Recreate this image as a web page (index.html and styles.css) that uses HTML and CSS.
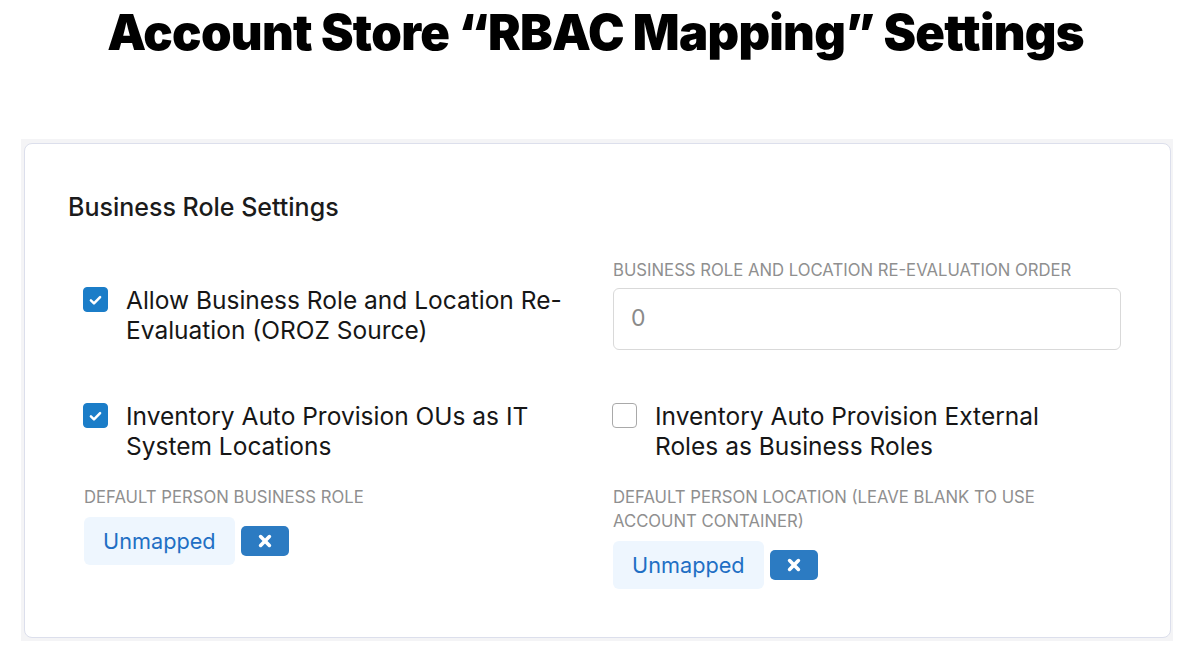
FILE: index.html
```html
<!DOCTYPE html>
<html lang="en">
<head>
<meta charset="utf-8">
<title>Account Store RBAC Mapping Settings</title>
<link rel="stylesheet" href="styles.css">
</head>
<body>
<h1 class="page-title">Account Store “RBAC Mapping” Settings</h1>
<div class="backdrop">
  <section class="card">
    <h2 class="card-title">Business Role Settings</h2>
    <div class="grid">
      <div class="cell cell-check-top">
        <label class="check">
          <span class="box checked"><svg viewBox="0 0 24 24" width="24" height="24"><path d="M7.2 12.4l3.2 3.1 6.4-6.6" fill="none" stroke="#fff" stroke-width="2.6" stroke-linecap="round" stroke-linejoin="round"/></svg></span>
          <span class="check-text">Allow Business Role and Location Re-Evaluation (OROZ Source)</span>
        </label>
      </div>
      <div class="cell">
        <div class="field-label">Business Role and Location Re-Evaluation Order</div>
        <div class="input">0</div>
      </div>
      <div class="cell row2">
        <label class="check">
          <span class="box checked"><svg viewBox="0 0 24 24" width="24" height="24"><path d="M7.2 12.4l3.2 3.1 6.4-6.6" fill="none" stroke="#fff" stroke-width="2.6" stroke-linecap="round" stroke-linejoin="round"/></svg></span>
          <span class="check-text">Inventory Auto Provision OUs as IT System Locations</span>
        </label>
      </div>
      <div class="cell row2">
        <label class="check">
          <span class="box"></span>
          <span class="check-text narrow">Inventory Auto Provision External Roles as Business Roles</span>
        </label>
      </div>
      <div class="cell row3">
        <div class="field-label">Default Person Business Role</div>
        <div class="mapping">
          <span class="unmapped">Unmapped</span>
          <span class="clear"><svg viewBox="0 0 18 18" width="18" height="18"><path d="M4.6 4.6l8.8 8.8M13.4 4.6l-8.8 8.8" stroke="#fff" stroke-width="3.6" stroke-linecap="round"/></svg></span>
        </div>
      </div>
      <div class="cell row3">
        <div class="field-label">Default Person Location (leave blank to use account container)</div>
        <div class="mapping">
          <span class="unmapped">Unmapped</span>
          <span class="clear"><svg viewBox="0 0 18 18" width="18" height="18"><path d="M4.6 4.6l8.8 8.8M13.4 4.6l-8.8 8.8" stroke="#fff" stroke-width="3.6" stroke-linecap="round"/></svg></span>
        </div>
      </div>
    </div>
  </section>
</div>
</body>
</html>
```
FILE: styles.css
```css
* { box-sizing: border-box; }
html, body { margin: 0; padding: 0; background: #ffffff; }
body {
  font-family: Inter, "Noto Sans", "Liberation Sans", sans-serif;
  color: #1a1a1a;
  width: 1187px;
  height: 658px;
  overflow: hidden;
}
.page-title {
  margin: 0;
  padding-top: 5px;
  padding-left: 4px;
  height: 139px;
  text-align: center;
  font-family: Inter, "Liberation Sans", sans-serif;
  font-weight: 900;
  font-size: 49px;
  line-height: 56px;
  letter-spacing: -0.72px;
  color: #000;
}
.backdrop {
  margin-left: 21px;
  width: 1152px;
  height: 502px;
  background: #f4f4f6;
  padding: 4px 2px 3px 3px;
}
.card {
  height: 495px;
  background: #fff;
  border: 1.5px solid #dcdfec;
  border-radius: 8px;
  padding: 47px 48px 0 43px;
}
.card-title {
  margin: 0;
  font-size: 25px;
  font-weight: 500;
  line-height: 32px;
  color: #1b1b1b;
}
.grid {
  display: grid;
  grid-template-columns: 507px 508px;
  column-gap: 22px;
  margin-top: 35px;
  margin-left: 16px;
}
.cell-check-top { padding-top: 27px; }
.row2 { margin-top: 51px; }
.row3 { margin-top: 24px; }
.check {
  display: flex;
  align-items: flex-start;
  gap: 18px;
}
.box {
  flex: none;
  width: 25px;
  height: 25px;
  margin-top: 2px;
  margin-left: -1px;
  border-radius: 4px;
  border: 1.5px solid #a9a9a9;
  background: #fff;
  display: flex;
  align-items: center;
  justify-content: center;
}
.box.checked {
  background: #1b7dc8;
  border-color: #1b7dc8;
}
.check-text {
  font-size: 24.5px;
  line-height: 30px;
  color: #161616;
}
.check-text.narrow { max-width: 440px; }
.field-label {
  font-size: 16.7px;
  line-height: 24px;
  text-transform: uppercase;
  color: #8f8f8f;
  max-width: 460px;
}
.cell > .field-label + .input { margin-top: 6px; }
.input {
  height: 62px;
  border: 1.5px solid #d9d9d9;
  border-radius: 6px;
  padding: 0 17px;
  font-size: 23px;
  line-height: 59px;
  color: #8a8a8a;
}
.mapping {
  display: flex;
  align-items: center;
  gap: 6px;
  margin-top: 8px;
}
.unmapped {
  height: 48px;
  padding: 0 19px;
  border-radius: 6px;
  background: #eef6fe;
  color: #1f6fc4;
  font-size: 21.7px;
  line-height: 48px;
}
.clear {
  width: 48px;
  height: 30px;
  border-radius: 5px;
  background: #2c7bc2;
  display: flex;
  align-items: center;
  justify-content: center;
}
```
